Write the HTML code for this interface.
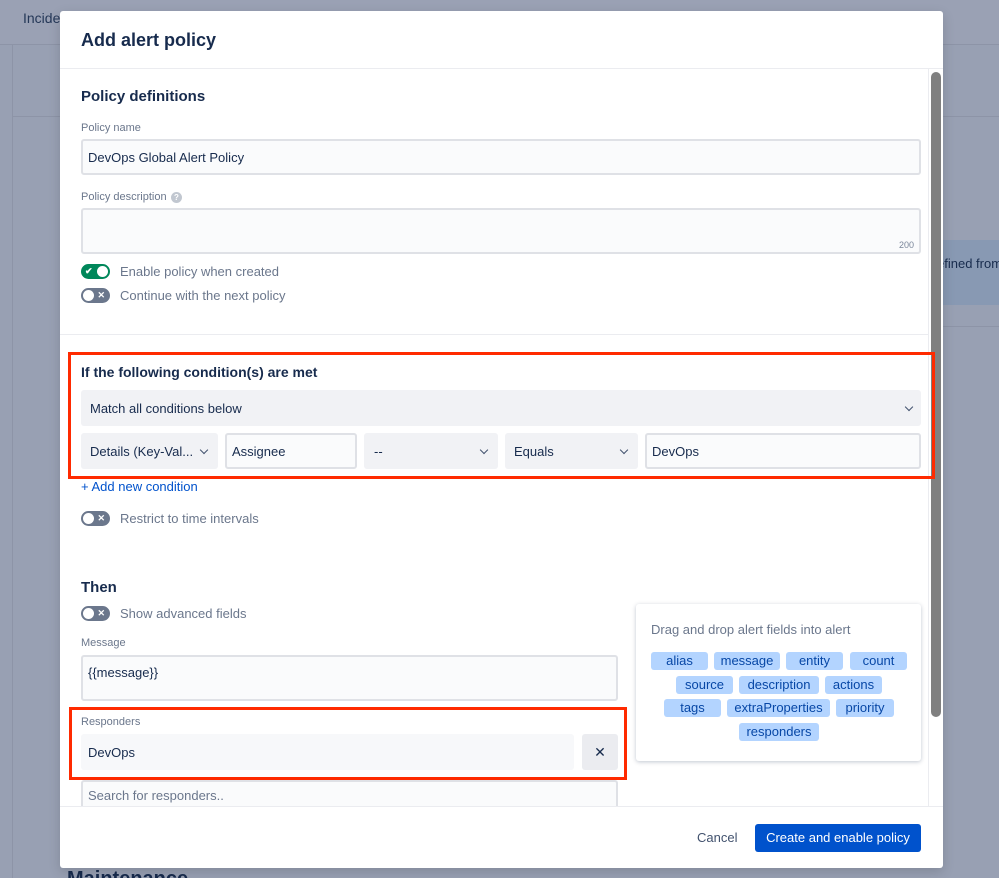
<!DOCTYPE html>
<html><head><meta charset="utf-8"><style>
*{box-sizing:border-box;margin:0;padding:0}
html,body{width:999px;height:878px;overflow:hidden}
body{background:#98a0b3;font-family:"Liberation Sans",sans-serif;color:#172b4d;position:relative}
.a{position:absolute}
.t{position:absolute;white-space:nowrap;line-height:1}
.lbl{font-size:11px;color:#6b778c}
.inp{position:absolute;background:#fafbfc;border:2px solid #dfe1e6;border-radius:3px}
.sel{position:absolute;background:#f1f2f5;border-radius:3px}
.tog{position:absolute;width:29px;height:15px;border-radius:8px;background:#6b778c}
.tog:before{content:"";position:absolute;left:2px;top:2px;width:11px;height:11px;border-radius:50%;background:#fff}
.tog:after{content:"✕";position:absolute;right:5px;top:2px;font-size:9px;color:#fff;font-weight:bold;line-height:11px}
.tog.on{background:#00875a}
.tog.on:before{left:16px}
.tog.on:after{content:"✔";left:4px;right:auto}
.tl{font-size:13px;color:#6b778c}
.tag{position:absolute;height:18px;background:#b3d4ff;border-radius:3px;color:#0747a6;font-size:13px;text-align:center;line-height:18px}
.chev{position:absolute;width:6px;height:6px;border-right:1.3px solid #42526e;border-bottom:1.3px solid #42526e;transform:rotate(45deg)}
.red{position:absolute;border:3px solid #ff2a00}
</style></head><body>
<div class="a" style="left:0;top:0;width:999px;height:44px;background:#9aa1b4"></div>
<div class="a" style="left:0;top:44px;width:999px;height:1px;background:#8d94a7"></div>
<div class="a" style="left:12px;top:44px;width:1px;height:834px;background:#8d94a7"></div>
<div class="a" style="left:12px;top:116px;width:987px;height:1px;background:#8d94a7"></div>
<div class="a" style="left:943px;top:240px;width:56px;height:65px;background:#8899b3"></div>
<div class="t" style="left:937px;top:257px;font-size:13px;color:#172b4d">efined from</div>
<div class="a" style="left:943px;top:326px;width:56px;height:1px;background:#8d94a7"></div>
<div class="t" style="left:23px;top:11px;font-size:14px;color:#253858">Incide</div>
<div class="t" style="left:67px;top:869px;font-size:20px;color:#172b4d;font-weight:bold">Maintenance</div>
<div class="a" style="left:60px;top:11px;width:883px;height:857px;background:#fff;border-radius:3px;box-shadow:0 4px 12px rgba(0,0,0,.15)"></div>
<div class="t" style="left:81px;top:31px;font-size:18px;font-weight:bold;color:#172b4d">Add alert policy</div>
<div class="a" style="left:60px;top:68px;width:883px;height:1px;background:#ebecf0"></div>
<div class="a" style="left:60px;top:806px;width:883px;height:1px;background:#ebecf0"></div>
<div class="a" style="left:928px;top:68px;width:1px;height:738px;background:#ebecf0"></div>
<div class="a" style="left:931px;top:72px;width:10px;height:645px;background:#808080;border-radius:5px"></div>

<div class="t" style="left:81px;top:89px;font-size:15px;font-weight:bold">Policy definitions</div>
<div class="t lbl" style="left:81px;top:123px">Policy name</div>
<div class="inp" style="left:81px;top:139px;width:840px;height:36px"></div>
<div class="t" style="left:88px;top:151px;font-size:13px">DevOps Global Alert Policy</div>
<div class="t lbl" style="left:81px;top:192px">Policy description</div>
<div class="a" style="left:171px;top:192px;width:11px;height:11px;border-radius:50%;background:#c1c7d0;color:#fff;font-size:8px;text-align:center;line-height:11px;font-weight:bold">?</div>
<div class="inp" style="left:81px;top:208px;width:840px;height:46px"></div>
<div class="t" style="left:899px;top:241px;font-size:9px;color:#7a869a">200</div>
<div class="tog on" style="left:81px;top:264px"></div>
<div class="t tl" style="left:120px;top:265px">Enable policy when created</div>
<div class="tog" style="left:81px;top:288px"></div>
<div class="t tl" style="left:120px;top:289px">Continue with the next policy</div>
<div class="a" style="left:60px;top:334px;width:868px;height:1px;background:#ebecf0"></div>

<div class="red" style="left:68px;top:352px;width:867px;height:127px"></div>
<div class="t" style="left:81px;top:365px;font-size:14px;font-weight:bold">If the following condition(s) are met</div>
<div class="sel" style="left:81px;top:390px;width:840px;height:36px"></div>
<div class="t" style="left:90px;top:402px;font-size:13px">Match all conditions below</div>
<div class="chev" style="left:906px;top:404px"></div>
<div class="sel" style="left:81px;top:433px;width:137px;height:36px"></div>
<div class="t" style="left:90px;top:445px;font-size:13px">Details (Key-Val...</div>
<div class="chev" style="left:201px;top:447px"></div>
<div class="inp" style="left:225px;top:433px;width:132px;height:36px"></div>
<div class="t" style="left:232px;top:445px;font-size:13px">Assignee</div>
<div class="sel" style="left:364px;top:433px;width:134px;height:36px"></div>
<div class="t" style="left:374px;top:445px;font-size:13px">--</div>
<div class="chev" style="left:481px;top:447px"></div>
<div class="sel" style="left:505px;top:433px;width:133px;height:36px"></div>
<div class="t" style="left:514px;top:445px;font-size:13px">Equals</div>
<div class="chev" style="left:621px;top:447px"></div>
<div class="inp" style="left:645px;top:433px;width:276px;height:36px"></div>
<div class="t" style="left:652px;top:445px;font-size:13px">DevOps</div>
<div class="t" style="left:81px;top:480px;font-size:13px;color:#0052cc">+ Add new condition</div>
<div class="tog" style="left:81px;top:511px"></div>
<div class="t tl" style="left:120px;top:512px">Restrict to time intervals</div>

<div class="t" style="left:81px;top:580px;font-size:15px;font-weight:bold">Then</div>
<div class="tog" style="left:81px;top:606px"></div>
<div class="t tl" style="left:120px;top:607px">Show advanced fields</div>
<div class="t lbl" style="left:81px;top:638px">Message</div>
<div class="inp" style="left:81px;top:655px;width:537px;height:46px"></div>
<div class="t" style="left:88px;top:666px;font-size:13px">{{message}}</div>

<div class="red" style="left:69px;top:707px;width:558px;height:73px"></div>
<div class="t lbl" style="left:81px;top:717px">Responders</div>
<div class="a" style="left:81px;top:734px;width:493px;height:36px;background:#f7f8fa;border-radius:3px"></div>
<div class="t" style="left:88px;top:746px;font-size:13px">DevOps</div>
<div class="a" style="left:582px;top:734px;width:36px;height:36px;background:#ebecf0;border-radius:3px;text-align:center;line-height:36px;font-size:14px;color:#172b4d">✕</div>
<div class="a" style="left:81px;top:780px;width:537px;height:26px;background:#fafbfc;border:2px solid #dfe1e6;border-bottom:none;border-radius:3px 3px 0 0"></div>
<div class="t" style="left:88px;top:789px;font-size:13px;color:#6b778c">Search for responders..</div>

<div class="a" style="left:636px;top:604px;width:285px;height:157px;background:#fff;border-radius:3px;box-shadow:0 1px 4px rgba(9,30,66,.25)"></div>
<div class="t" style="left:651px;top:623px;font-size:13px;color:#6b778c">Drag and drop alert fields into alert</div>
<div class="tag" style="left:651px;top:652px;width:57px">alias</div>
<div class="tag" style="left:714px;top:652px;width:66px">message</div>
<div class="tag" style="left:786px;top:652px;width:57px">entity</div>
<div class="tag" style="left:850px;top:652px;width:57px">count</div>
<div class="tag" style="left:676px;top:676px;width:57px">source</div>
<div class="tag" style="left:739px;top:676px;width:80px">description</div>
<div class="tag" style="left:825px;top:676px;width:57px">actions</div>
<div class="tag" style="left:664px;top:699px;width:57px">tags</div>
<div class="tag" style="left:727px;top:699px;width:103px">extraProperties</div>
<div class="tag" style="left:836px;top:699px;width:58px">priority</div>
<div class="tag" style="left:739px;top:723px;width:80px">responders</div>

<div class="t" style="left:697px;top:831px;font-size:13px;color:#42526e">Cancel</div>
<div class="a" style="left:755px;top:824px;width:166px;height:28px;background:#0052cc;border-radius:3px;color:#fff;font-size:13px;text-align:center;line-height:28px">Create and enable policy</div>
</body></html>
